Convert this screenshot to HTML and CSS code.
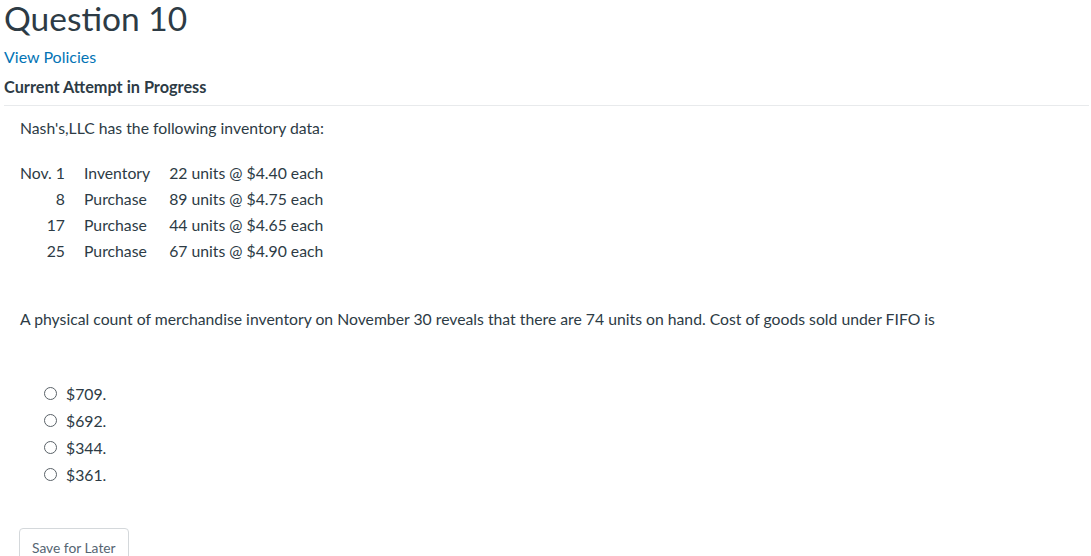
FILE: index.html
```html
<!DOCTYPE html>
<html>
<head>
<meta charset="utf-8">
<link rel="stylesheet" href="styles.css">
</head>
<body>
<div class="page">
  <header class="q-header">
    <h1 class="q-title">Question 10</h1>
    <a class="q-link" href="#">View Policies</a>
    <div class="q-status">Current Attempt in Progress</div>
  </header>
  <section class="q-body">
    <p class="intro">Nash's,LLC has the following inventory data:</p>
    <table class="inv">
      <tr><td class="d">Nov. 1</td><td>Inventory</td><td>22 units @ $4.40 each</td></tr>
      <tr><td class="d">8</td><td>Purchase</td><td>89 units @ $4.75 each</td></tr>
      <tr><td class="d">17</td><td>Purchase</td><td>44 units @ $4.65 each</td></tr>
      <tr><td class="d">25</td><td>Purchase</td><td>67 units @ $4.90 each</td></tr>
    </table>
    <p class="prompt">A physical count of merchandise inventory on November 30 reveals that there are 74 units on hand. Cost of goods sold under FIFO is</p>
    <ul class="answers">
      <li><span class="radio"></span><span>$709.</span></li>
      <li><span class="radio"></span><span>$692.</span></li>
      <li><span class="radio"></span><span>$344.</span></li>
      <li><span class="radio"></span><span>$361.</span></li>
    </ul>
    <button class="save">Save for Later</button>
  </section>
</div>
</body>
</html>
```

FILE: styles.css
```css
html, body {
  margin: 0;
  padding: 0;
  background: #ffffff;
}
body {
  font-family: Lato, "Noto Sans", sans-serif;
  color: #2d3b45;
}
.page {
  padding: 0 2px 0 4px;
}
.q-header {
  border-bottom: 1px solid #e8eaec;
  padding-bottom: 7px;
}
.q-title {
  margin: 0;
  font-size: 33.5px;
  font-weight: 400;
  line-height: 36px;
}
.q-link {
  display: block;
  margin-top: 10px;
  font-size: 16px;
  line-height: 22px;
  color: #0374b5;
  text-decoration: none;
}
.q-status {
  margin-top: 8px;
  font-size: 16.3px;
  font-weight: 700;
  line-height: 22px;
}
.q-body {
  padding: 0 0 0 16px;
  font-size: 15.75px;
}
.intro {
  margin: 11px 0 0;
  line-height: 22px;
}
.inv {
  margin-top: 21px;
  border-collapse: collapse;
}
.inv td {
  padding: 0 19px 0 0;
  height: 26px;
  line-height: 22px;
}
.inv td.d {
  text-align: right;
}
.prompt {
  margin: 44px 0 0;
  line-height: 22px;
}
.answers {
  list-style: none;
  margin: 50px 0 0;
  padding: 0 0 0 24px;
}
.answers li {
  display: flex;
  align-items: center;
  gap: 9px;
  height: 27px;
}
.radio {
  width: 11px;
  height: 11px;
  border: 1px solid #5a6268;
  border-radius: 50%;
}
.save {
  margin: 40px 0 0 -1px;
  font-family: Lato, "Noto Sans", sans-serif;
  font-size: 13.8px;
  color: #556572;
  background: #ffffff;
  border: 1px solid #d4d8db;
  border-radius: 4px;
  padding: 9px 12px;
  line-height: 20px;
}
```
